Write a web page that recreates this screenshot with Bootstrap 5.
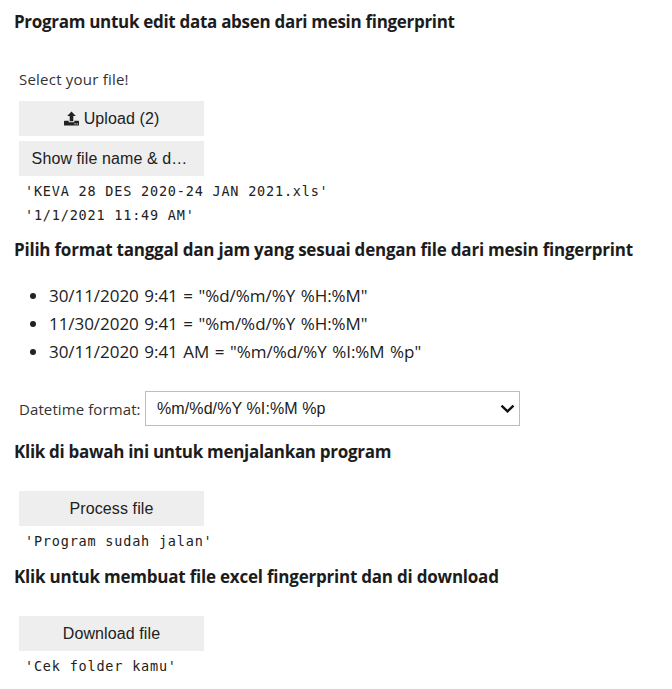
<!DOCTYPE html>
<html lang="id">
<head>
<meta charset="utf-8">
<title>Fingerprint</title>
<link href="https://cdn.jsdelivr.net/npm/bootstrap@5.3.0/dist/css/bootstrap.min.css" rel="stylesheet">
<style>
body{font-family:"Open Sans","Noto Sans",sans-serif;color:#212121;background:#fff}
.notebook{padding:10px 0 0 14px;height:689px;overflow:hidden}
.title{font-size:17px;line-height:24px;font-weight:700;letter-spacing:-.3px;color:#1c1c1c}
.title-wide{letter-spacing:-.22px}
.cell-out{padding-left:5px}
.tool{width:185px;height:35px;padding:0;border:0;border-radius:0;background:#eee;color:#212121;font:16px/35px "Liberation Sans",sans-serif;letter-spacing:.1px}
.tool:hover{background:#e2e2e2}
.result{font:13.5px/24px "DejaVu Sans Mono",monospace;letter-spacing:.8px;margin:3px 0 0 6px;color:#212121;overflow:visible}
.lbl{font-size:15px;line-height:28px;letter-spacing:.1px;color:#333}
.opts{font-size:17px;line-height:28px;padding-left:35px;margin:20px 0 25px}
.opts li{letter-spacing:-.05px;word-spacing:1.2px}
.fmt{width:375px;height:35px;border:1px solid #bdbdbd;border-radius:0;color:#212121;font:16px/33px "Liberation Sans",sans-serif;letter-spacing:.1px;padding:0 4px 0 11px}
.first-label{margin-top:31px;margin-bottom:8px;letter-spacing:.22px}
.gap-title{margin-bottom:27px}
</style>
</head>
<body>
<main class="notebook">
  <h4 class="title mb-0 text-nowrap">Program untuk edit data absen dari mesin fingerprint</h4>
  <section class="cell-out">
    <div class="lbl first-label">Select your file!</div>
    <div class="d-flex flex-column align-items-start" style="gap:5px">
      <button type="button" class="btn tool d-flex align-items-center justify-content-center">
        <svg class="me-1" width="16" height="16" viewBox="0 0 16 16" fill="currentColor" aria-hidden="true"><path fill-rule="evenodd" d="M7.5 .5 11.8 5H9.3V10.2H5.7V5H3.2ZM.8 9.8H4.7V11.2H10.3V9.8H14.2Q15 9.8 15 10.6V14Q15 14.6 14.3 14.6H.7Q0 14.6 0 14V10.6Q0 9.8 .8 9.8ZM10.5 12.3V13.4H11.6V12.3ZM12.7 12.3V13.4H13.8V12.3Z"/></svg>
        <span>Upload (2)</span>
      </button>
      <button type="button" class="btn tool pe-1">Show file name &amp; d…</button>
    </div>
    <pre class="result">'KEVA 28 DES 2020-24 JAN 2021.xls'
'1/1/2021 11:49 AM'</pre>
  </section>
  <h4 class="title title-wide text-nowrap mb-0" style="margin-top:11px">Pilih format tanggal dan jam yang sesuai dengan file dari mesin fingerprint</h4>
  <ul class="opts">
    <li>30/11/2020 9:41 = "%d/%m/%Y %H:%M"</li>
    <li>11/30/2020 9:41 = "%m/%d/%Y %H:%M"</li>
    <li>30/11/2020 9:41 AM = "%m/%d/%Y %I:%M %p"</li>
  </ul>
  <section class="cell-out d-flex align-items-center">
    <label class="lbl text-nowrap" style="width:126px" for="format">Datetime format:</label>
    <div class="fmt d-flex align-items-center justify-content-between" id="format" role="combobox" tabindex="0">
      <span>%m/%d/%Y %I:%M %p</span>
      <svg width="15" height="10" viewBox="0 0 15 10" fill="none" stroke="#111" stroke-width="2.4" aria-hidden="true"><path d="M1.5 1.6 7.5 7.4 13.5 1.6"/></svg>
    </div>
  </section>
  <h4 class="title text-nowrap gap-title" style="margin-top:14px">Klik di bawah ini untuk menjalankan program</h4>
  <section class="cell-out">
    <button type="button" class="btn tool d-block">Process file</button>
    <pre class="result">'Program sudah jalan'</pre>
  </section>
  <h4 class="title title-wide text-nowrap gap-title" style="margin-top:12px">Klik untuk membuat file excel fingerprint dan di download</h4>
  <section class="cell-out">
    <button type="button" class="btn tool d-block">Download file</button>
    <pre class="result">'Cek folder kamu'</pre>
  </section>
</main>
<script src="https://cdn.jsdelivr.net/npm/bootstrap@5.3.0/dist/js/bootstrap.bundle.min.js"></script>
</body>
</html>
